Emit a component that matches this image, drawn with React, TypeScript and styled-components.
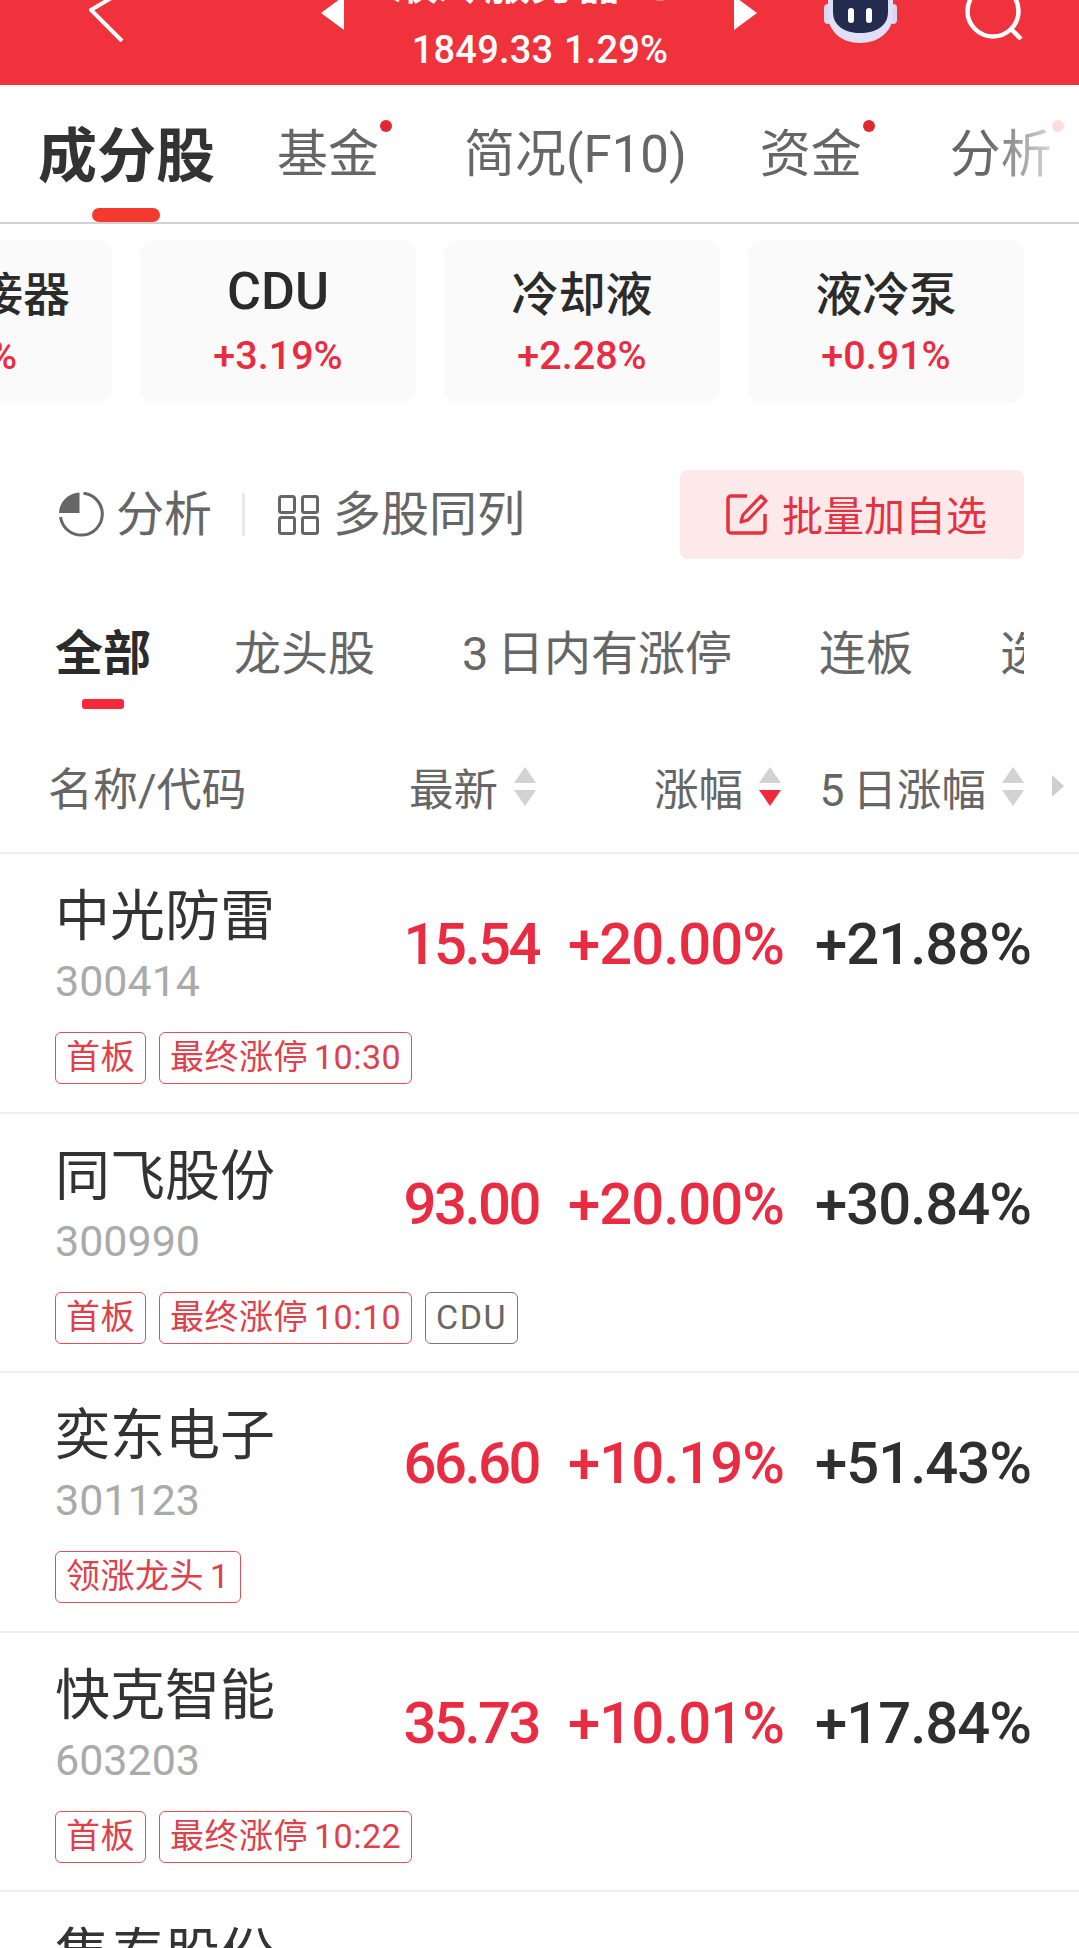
import styled, { createGlobalStyle } from "styled-components";

const GlobalStyle = createGlobalStyle`
  html, body {
    margin: 0;
    padding: 0;
    background: #fff;
    overflow: hidden;
  }
  body {
    font-family: Roboto, "Noto Sans CJK SC", sans-serif;
  }
`;

const Page = styled.div`
  width: 1079px;
  height: 1948px;
  overflow: hidden;
  background: #fff;
`;

const Header = styled.header`
  height: 85px;
  background: #f0323c;
  display: flex;
  align-items: flex-end;
  padding-left: 89px;
  overflow: hidden;
  color: #fff;
`;

const HeaderIcon = styled.svg<{ $bottom: number; $right: number }>`
  flex-shrink: 0;
  margin-bottom: ${(p) => p.$bottom}px;
  margin-right: ${(p) => p.$right}px;
`;

const HeaderCenter = styled.div`
  width: 390px;
  flex-shrink: 0;
  display: flex;
  flex-direction: column;
  align-items: center;
  padding-bottom: 12px;
`;

const HeaderTitle = styled.div`
  display: flex;
  align-items: center;
  gap: 24px;
  font-size: 46px;
  line-height: 46px;
  font-weight: 500;
  margin-bottom: 21px;
  margin-right: 12px;
`;

const TitleMark = styled.span`
  width: 28px;
  height: 28px;
  border-radius: 50%;
  background: #f88a8e;
  margin-top: 8px;
`;

const HeaderValue = styled.div`
  font-size: 38px;
  line-height: 46px;
  font-weight: 500;
  letter-spacing: 0.2px;
  word-spacing: 1px;
  margin-left: 2px;
`;

const TabBar = styled.nav`
  height: 139px;
  box-sizing: border-box;
  display: flex;
  padding: 35px 0 0 38px;
  border-bottom: 2px solid #d2d2d2;
  overflow: hidden;
`;

const TopTab = styled.div<{ $active?: boolean; $gap: number; $fade?: boolean }>`
  position: relative;
  flex-shrink: 0;
  height: 70px;
  line-height: 70px;
  margin-top: ${(p) => (p.$active ? 2 : 0)}px;
  margin-right: ${(p) => p.$gap}px;
  font-size: ${(p) => (p.$active ? 59 : 51)}px;
  font-weight: ${(p) => (p.$active ? 700 : 400)};
  color: ${(p) => (p.$active ? "#333" : "#666")};
  ${(p) =>
    p.$fade &&
    `-webkit-mask-image: linear-gradient(90deg, #000 35%, rgba(0,0,0,.25) 100%);
     mask-image: linear-gradient(90deg, #000 35%, rgba(0,0,0,.25) 100%);`}
`;

const TabIndicator = styled.span`
  position: absolute;
  left: 54px;
  top: 86px;
  width: 68px;
  height: 14px;
  border-radius: 7px;
  background: #f4392f;
`;

const TabWrap = styled.div`
  position: relative;
  flex-shrink: 0;
  display: flex;
`;

const TabDot = styled.span<{ $pale?: boolean; $right: number }>`
  position: absolute;
  top: 0;
  right: ${(p) => p.$right}px;
  width: 12px;
  height: 12px;
  border-radius: 50%;
  background: ${(p) => (p.$pale ? "#fbdcdc" : "#e0282e")};
`;

const CardStrip = styled.section`
  margin-top: 16px;
  display: flex;
  justify-content: flex-end;
  gap: 28px;
  padding-right: 55px;
  overflow: hidden;
`;

const ConceptCard = styled.div`
  flex-shrink: 0;
  min-width: 276px;
  height: 163px;
  box-sizing: border-box;
  padding: 25px 42px 0;
  background: #fafafa;
  border-radius: 14px;
  text-align: center;
`;

const CardName = styled.div<{ $latin?: boolean }>`
  font-size: ${(p) => (p.$latin ? 52 : 47)}px;
  line-height: ${(p) => (p.$latin ? 54 : 60)}px;
  padding-bottom: ${(p) => (p.$latin ? 6 : 0)}px;
  font-weight: 500;
  color: #2b2b2b;
  white-space: nowrap;
`;

const CardPct = styled.div`
  margin-top: 7px;
  font-size: 39.5px;
  line-height: 48px;
  font-weight: 500;
  color: #ea2c42;
`;

const Toolbar = styled.section`
  margin-top: 67px;
  height: 89px;
  display: flex;
  align-items: center;
  padding: 0 55px 0 59px;
`;

const ToolIcon = styled.svg`
  flex-shrink: 0;
`;

const ToolText = styled.span<{ $gap: number }>`
  margin-left: ${(p) => p.$gap}px;
  font-size: 48px;
  line-height: 60px;
  color: #666;
`;

const ToolDivider = styled.span`
  width: 3px;
  height: 43px;
  margin: 0 33px 0 30px;
  background: #e8e8e8;
`;

const BatchButton = styled.div`
  margin-left: auto;
  width: 344px;
  height: 89px;
  box-sizing: border-box;
  padding-left: 46px;
  display: flex;
  align-items: center;
  gap: 14px;
  background: #fde8ea;
  border-radius: 8px;
  font-size: 41px;
  color: #e5323f;
`;

const BatchLabel = styled.span`
  margin-bottom: 3px;
`;

const SubTabs = styled.section`
  margin: 60px 55px 0 55px;
  height: 91px;
  display: flex;
  gap: 87px;
  overflow: hidden;
`;

const SubTab = styled.div<{ $active?: boolean }>`
  position: relative;
  flex-shrink: 0;
  height: 70px;
  line-height: 70px;
  font-size: ${(p) => (p.$active ? 48 : 47)}px;
  margin-right: ${(p) => (p.$active ? -4 : 0)}px;
  word-spacing: -3px;
  font-weight: ${(p) => (p.$active ? 700 : 400)};
  color: ${(p) => (p.$active ? "#2b2b2b" : "#666")};
  ${(p) =>
    p.$active &&
    `&::after {
      content: "";
      position: absolute;
      left: 27px;
      top: 80px;
      width: 42px;
      height: 10px;
      border-radius: 3px;
      background: #f5283c;
    }`}
`;

const TableHead = styled.div`
  margin: 34px 0 24px;
  height: 84px;
  display: grid;
  grid-template-columns: 307px 181px 245px 243px auto;
  align-items: center;
  padding-left: 48px;
  font-size: 44.5px;
  word-spacing: -3px;
  color: #666;
`;

const HeadCell = styled.div`
  display: flex;
  justify-content: flex-end;
  align-items: center;
  gap: 16px;
  white-space: nowrap;
`;

const HeadName = styled.div`
  font-size: 45px;
  white-space: nowrap;
`;

const MoreArrow = styled.svg`
  margin-left: 28px;
`;

const StockList = styled.div`
  border-top: 2px solid #eee;
`;

const StockRow = styled.div`
  height: 259.5px;
  box-sizing: border-box;
  padding: 31px 48px 0 55px;
  border-bottom: 2px solid #eee;
`;

const StockMain = styled.div`
  display: grid;
  grid-template-columns: 304px 180px 245px 247px;
  align-items: center;
`;

const StockName = styled.div`
  font-size: 55px;
  line-height: 62px;
  color: #333;
  white-space: nowrap;
`;

const StockCode = styled.div`
  margin-top: 12px;
  font-size: 43px;
  line-height: 44px;
  color: #aaa;
`;

const Value = styled.div<{ $up?: boolean; $tight?: boolean }>`
  text-align: right;
  font-size: 58px;
  font-weight: 500;
  line-height: 66px;
  letter-spacing: ${(p) => (p.$tight ? -2.5 : -1)}px;
  color: ${(p) => (p.$up ? "#ea2c42" : "#2f2f2f")};
`;

const TagRow = styled.div`
  margin-top: 29px;
  display: flex;
  gap: 13px;
`;

const Tag = styled.span<{ $plain?: boolean }>`
  height: 52px;
  box-sizing: border-box;
  padding: 0 10px;
  line-height: 49px;
  font-size: 34px;
  letter-spacing: ${(p) => (p.$plain ? 1.5 : 0.5)}px;
  word-spacing: -3px;
  white-space: nowrap;
  border-radius: 6px;
  border: 1.5px solid ${(p) => (p.$plain ? "#777" : "#e0505a")};
  color: ${(p) => (p.$plain ? "#666" : "#e0404a")};
`;

const SortArrows = ({ active }: { active?: boolean }) => (
  <svg width="22" height="39" viewBox="0 0 22 39">
    <polygon points="11,0 22,16 0,16" fill="#d2d2d2" />
    <polygon points="0,23 22,23 11,39" fill={active ? "#f0283c" : "#d2d2d2"} />
  </svg>
);

const cards = [
  { name: "快速连接器", pct: "+1.52%" },
  { name: "CDU", pct: "+3.19%", latin: true },
  { name: "冷却液", pct: "+2.28%" },
  { name: "液冷泵", pct: "+0.91%" },
];

const subTabs = ["全部", "龙头股", "3 日内有涨停", "连板", "选股"];

const stocks = [
  {
    name: "中光防雷",
    code: "300414",
    price: "15.54",
    pct: "+20.00%",
    five: "+21.88%",
    tags: ["首板", "最终涨停 10:30"],
  },
  {
    name: "同飞股份",
    code: "300990",
    price: "93.00",
    pct: "+20.00%",
    five: "+30.84%",
    tags: ["首板", "最终涨停 10:10", "CDU"],
  },
  {
    name: "奕东电子",
    code: "301123",
    price: "66.60",
    pct: "+10.19%",
    five: "+51.43%",
    tags: ["领涨龙头 1"],
  },
  {
    name: "快克智能",
    code: "603203",
    price: "35.73",
    pct: "+10.01%",
    five: "+17.84%",
    tags: ["首板", "最终涨停 10:22"],
  },
  {
    name: "集泰股份",
    code: "002909",
    price: "9.18",
    pct: "+10.07%",
    five: "+12.50%",
    tags: ["首板"],
  },
];

const App = () => {
  return (
    <Page>
      <GlobalStyle />
      <Header>
        <HeaderIcon $bottom={43} $right={197} width="35" height="42" viewBox="0 0 35 42">
          <path d="M24 -3 L2 10 L33 41" fill="none" stroke="#fff" strokeWidth="4" />
        </HeaderIcon>
        <HeaderIcon $bottom={55} $right={0} width="23" height="30" viewBox="0 0 23 30">
          <polygon points="0,13 23,-4 23,30" fill="#fff" />
        </HeaderIcon>
        <HeaderCenter>
          <HeaderTitle>
            液冷服务器
            <TitleMark />
          </HeaderTitle>
          <HeaderValue>1849.33 1.29%</HeaderValue>
        </HeaderCenter>
        <HeaderIcon $bottom={55} $right={67} width="23" height="30" viewBox="0 0 23 30">
          <polygon points="23,13 0,-4 0,30" fill="#fff" />
        </HeaderIcon>
        <HeaderIcon $bottom={42} $right={68} width="73" height="43" viewBox="0 0 73 43">
          <rect x="0" y="4" width="8" height="20" rx="4" fill="#d6d8f5" />
          <rect x="65" y="4" width="8" height="20" rx="4" fill="#d6d8f5" />
          <path d="M4 -10 H69 V14 C69 32 54 43 36 43 C18 43 4 32 4 14 Z" fill="#dfe0f8" />
          <path d="M9 -10 H64 V12 C64 26 52 33 36 33 C21 33 9 26 9 12 Z" fill="#232c4e" />
          <rect x="24" y="8" width="6" height="15" rx="3" fill="#fff" />
          <rect x="42" y="8" width="6" height="15" rx="3" fill="#fff" />
        </HeaderIcon>
        <HeaderIcon $bottom={45} $right={0} width="58" height="40" viewBox="0 0 58 40">
          <circle cx="28" cy="11" r="25.5" fill="none" stroke="#fff" strokeWidth="4.5" />
          <path d="M46 29 L56 39" stroke="#fff" strokeWidth="4.5" />
        </HeaderIcon>
      </Header>

      <TabBar>
        <TopTab $active $gap={62}>
          成分股
          <TabIndicator />
        </TopTab>
        <TabWrap>
          <TopTab $gap={85}>基金</TopTab>
          <TabDot $right={72} />
        </TabWrap>
        <TopTab $gap={73}>简况(F10)</TopTab>
        <TabWrap>
          <TopTab $gap={88}>资金</TopTab>
          <TabDot $right={75} />
        </TabWrap>
        <TabWrap>
          <TopTab $gap={0} $fade>
            分析
          </TopTab>
          <TabDot $pale $right={-12} />
        </TabWrap>
      </TabBar>

      <CardStrip>
        {cards.map((card) => (
          <ConceptCard key={card.name}>
            <CardName $latin={card.latin}>{card.name}</CardName>
            <CardPct>{card.pct}</CardPct>
          </ConceptCard>
        ))}
      </CardStrip>

      <Toolbar>
        <ToolIcon width="45" height="45" viewBox="0 0 45 45">
          <path d="M20.5 0.5 V21 H0 A21 21 0 0 1 20.5 0.5 Z" fill="#666" />
          <path
            d="M24.5 1.2 A21 21 0 1 1 1.5 25"
            fill="none"
            stroke="#666"
            strokeWidth="3"
          />
        </ToolIcon>
        <ToolText $gap={12}>分析</ToolText>
        <ToolDivider />
        <ToolIcon width="41" height="40" viewBox="0 0 41 40">
          <rect x="1.5" y="1.5" width="15" height="16" rx="2" fill="none" stroke="#666" strokeWidth="3" />
          <rect x="24.5" y="1.5" width="15" height="16" rx="2" fill="none" stroke="#666" strokeWidth="3" />
          <rect x="1.5" y="22.5" width="15" height="16" rx="2" fill="none" stroke="#666" strokeWidth="3" />
          <rect x="24.5" y="22.5" width="15" height="16" rx="2" fill="none" stroke="#666" strokeWidth="3" />
        </ToolIcon>
        <ToolText $gap={14}>多股同列</ToolText>
        <BatchButton>
          <svg width="42" height="41" viewBox="0 0 42 41">
            <path
              d="M21 2 H5 A3 3 0 0 0 2 5 V36 A3 3 0 0 0 5 39 H36 A3 3 0 0 0 39 36 V20"
              fill="none"
              stroke="#e5323f"
              strokeWidth="3.5"
            />
            <path
              d="M35 2 L40 7 L22 26 L15 28 L17 21 Z"
              fill="none"
              stroke="#e5323f"
              strokeWidth="3.2"
              strokeLinejoin="round"
            />
          </svg>
          <BatchLabel>批量加自选</BatchLabel>
        </BatchButton>
      </Toolbar>

      <SubTabs>
        {subTabs.map((tab, i) => (
          <SubTab key={tab} $active={i === 0}>
            {tab}
          </SubTab>
        ))}
      </SubTabs>

      <TableHead>
        <HeadName>名称/代码</HeadName>
        <HeadCell>
          最新
          <SortArrows />
        </HeadCell>
        <HeadCell>
          涨幅
          <SortArrows active />
        </HeadCell>
        <HeadCell>
          5 日涨幅
          <SortArrows />
        </HeadCell>
        <MoreArrow width="12" height="22" viewBox="0 0 12 22">
          <polygon points="0,0 12,11 0,22" fill="#cfcfcf" />
        </MoreArrow>
      </TableHead>

      <StockList>
        {stocks.map((stock) => (
          <StockRow key={stock.code}>
            <StockMain>
              <div>
                <StockName>{stock.name}</StockName>
                <StockCode>{stock.code}</StockCode>
              </div>
              <Value $up $tight>
                {stock.price}
              </Value>
              <Value $up>{stock.pct}</Value>
              <Value>{stock.five}</Value>
            </StockMain>
            <TagRow>
              {stock.tags.map((tag) => (
                <Tag key={tag} $plain={tag === "CDU"}>
                  {tag}
                </Tag>
              ))}
            </TagRow>
          </StockRow>
        ))}
      </StockList>
    </Page>
  );
};

export default App;
